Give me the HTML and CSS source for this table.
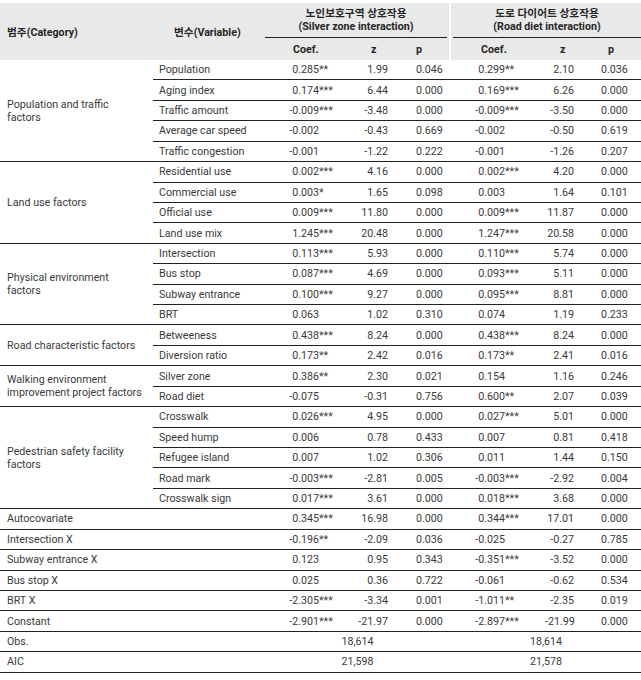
FILE: index.html
```html
<!DOCTYPE html>
<html lang="ko">
<head>
<meta charset="utf-8">
<link rel="stylesheet" href="styles.css">
</head>
<body>
<table class="tbl">
  <colgroup>
    <col class="w-cat"><col class="w-var"><col class="w-c1"><col class="w-z1"><col class="w-p1"><col class="w-c2"><col class="w-z2"><col class="w-p2">
  </colgroup>
  <thead>
    <tr class="h1">
      <th rowspan="2" class="hcat">범주(Category)</th>
      <th rowspan="2" class="hvar">변수(Variable)</th>
      <th colspan="3" class="grp g1"><div class="gt">노인보호구역 상호작용<br>(Silver zone interaction)</div></th>
      <th colspan="3" class="grp g2"><div class="gt">도로 다이어트 상호작용<br>(Road diet interaction)</div></th>
    </tr>
    <tr class="h2">
      <th class="hc1">Coef.</th><th class="hz1">z</th><th class="hp1">p</th>
      <th class="hc2">Coef.</th><th class="hz2">z</th><th class="hp2">p</th>
    </tr>
  </thead>
  <tbody>
    <tr><td rowspan="5" class="cat">Population and traffic<br>factors</td><td class="var">Population</td><td class="c1"><span class="n">0.285</span>**</td><td class="z1">1.99</td><td class="p1">0.046</td><td class="c2"><span class="n">0.299</span>**</td><td class="z2">2.10</td><td class="p2">0.036</td></tr>
    <tr><td class="var">Aging index</td><td class="c1"><span class="n">0.174</span>***</td><td class="z1">6.44</td><td class="p1">0.000</td><td class="c2"><span class="n">0.169</span>***</td><td class="z2">6.26</td><td class="p2">0.000</td></tr>
    <tr><td class="var">Traffic amount</td><td class="c1"><span class="n">-0.009</span>***</td><td class="z1">-3.48</td><td class="p1">0.000</td><td class="c2"><span class="n">-0.009</span>***</td><td class="z2">-3.50</td><td class="p2">0.000</td></tr>
    <tr><td class="var">Average car speed</td><td class="c1"><span class="n">-0.002</span></td><td class="z1">-0.43</td><td class="p1">0.669</td><td class="c2"><span class="n">-0.002</span></td><td class="z2">-0.50</td><td class="p2">0.619</td></tr>
    <tr><td class="var">Traffic congestion</td><td class="c1"><span class="n">-0.001</span></td><td class="z1">-1.22</td><td class="p1">0.222</td><td class="c2"><span class="n">-0.001</span></td><td class="z2">-1.26</td><td class="p2">0.207</td></tr>

    <tr><td rowspan="4" class="cat">Land use factors</td><td class="var">Residential use</td><td class="c1"><span class="n">0.002</span>***</td><td class="z1">4.16</td><td class="p1">0.000</td><td class="c2"><span class="n">0.002</span>***</td><td class="z2">4.20</td><td class="p2">0.000</td></tr>
    <tr><td class="var">Commercial use</td><td class="c1"><span class="n">0.003</span>*</td><td class="z1">1.65</td><td class="p1">0.098</td><td class="c2"><span class="n">0.003</span></td><td class="z2">1.64</td><td class="p2">0.101</td></tr>
    <tr><td class="var">Official use</td><td class="c1"><span class="n">0.009</span>***</td><td class="z1">11.80</td><td class="p1">0.000</td><td class="c2"><span class="n">0.009</span>***</td><td class="z2">11.87</td><td class="p2">0.000</td></tr>
    <tr><td class="var">Land use mix</td><td class="c1"><span class="n">1.245</span>***</td><td class="z1">20.48</td><td class="p1">0.000</td><td class="c2"><span class="n">1.247</span>***</td><td class="z2">20.58</td><td class="p2">0.000</td></tr>

    <tr><td rowspan="4" class="cat">Physical environment<br>factors</td><td class="var">Intersection</td><td class="c1"><span class="n">0.113</span>***</td><td class="z1">5.93</td><td class="p1">0.000</td><td class="c2"><span class="n">0.110</span>***</td><td class="z2">5.74</td><td class="p2">0.000</td></tr>
    <tr><td class="var">Bus stop</td><td class="c1"><span class="n">0.087</span>***</td><td class="z1">4.69</td><td class="p1">0.000</td><td class="c2"><span class="n">0.093</span>***</td><td class="z2">5.11</td><td class="p2">0.000</td></tr>
    <tr><td class="var">Subway entrance</td><td class="c1"><span class="n">0.100</span>***</td><td class="z1">9.27</td><td class="p1">0.000</td><td class="c2"><span class="n">0.095</span>***</td><td class="z2">8.81</td><td class="p2">0.000</td></tr>
    <tr><td class="var">BRT</td><td class="c1"><span class="n">0.063</span></td><td class="z1">1.02</td><td class="p1">0.310</td><td class="c2"><span class="n">0.074</span></td><td class="z2">1.19</td><td class="p2">0.233</td></tr>

    <tr><td rowspan="2" class="cat">Road characteristic factors</td><td class="var">Betweeness</td><td class="c1"><span class="n">0.438</span>***</td><td class="z1">8.24</td><td class="p1">0.000</td><td class="c2"><span class="n">0.438</span>***</td><td class="z2">8.24</td><td class="p2">0.000</td></tr>
    <tr><td class="var">Diversion ratio</td><td class="c1"><span class="n">0.173</span>**</td><td class="z1">2.42</td><td class="p1">0.016</td><td class="c2"><span class="n">0.173</span>**</td><td class="z2">2.41</td><td class="p2">0.016</td></tr>

    <tr><td rowspan="2" class="cat">Walking environment<br>improvement project factors</td><td class="var">Silver zone</td><td class="c1"><span class="n">0.386</span>**</td><td class="z1">2.30</td><td class="p1">0.021</td><td class="c2"><span class="n">0.154</span></td><td class="z2">1.16</td><td class="p2">0.246</td></tr>
    <tr><td class="var">Road diet</td><td class="c1"><span class="n">-0.075</span></td><td class="z1">-0.31</td><td class="p1">0.756</td><td class="c2"><span class="n">0.600</span>**</td><td class="z2">2.07</td><td class="p2">0.039</td></tr>

    <tr><td rowspan="5" class="cat">Pedestrian safety facility<br>factors</td><td class="var">Crosswalk</td><td class="c1"><span class="n">0.026</span>***</td><td class="z1">4.95</td><td class="p1">0.000</td><td class="c2"><span class="n">0.027</span>***</td><td class="z2">5.01</td><td class="p2">0.000</td></tr>
    <tr><td class="var">Speed hump</td><td class="c1"><span class="n">0.006</span></td><td class="z1">0.78</td><td class="p1">0.433</td><td class="c2"><span class="n">0.007</span></td><td class="z2">0.81</td><td class="p2">0.418</td></tr>
    <tr><td class="var">Refugee island</td><td class="c1"><span class="n">0.007</span></td><td class="z1">1.02</td><td class="p1">0.306</td><td class="c2"><span class="n">0.011</span></td><td class="z2">1.44</td><td class="p2">0.150</td></tr>
    <tr><td class="var">Road mark</td><td class="c1"><span class="n">-0.003</span>***</td><td class="z1">-2.81</td><td class="p1">0.005</td><td class="c2"><span class="n">-0.003</span>***</td><td class="z2">-2.92</td><td class="p2">0.004</td></tr>
    <tr><td class="var">Crosswalk sign</td><td class="c1"><span class="n">0.017</span>***</td><td class="z1">3.61</td><td class="p1">0.000</td><td class="c2"><span class="n">0.018</span>***</td><td class="z2">3.68</td><td class="p2">0.000</td></tr>

    <tr><td colspan="2" class="cat">Autocovariate</td><td class="c1"><span class="n">0.345</span>***</td><td class="z1">16.98</td><td class="p1">0.000</td><td class="c2"><span class="n">0.344</span>***</td><td class="z2">17.01</td><td class="p2">0.000</td></tr>
    <tr><td colspan="2" class="cat">Intersection X</td><td class="c1"><span class="n">-0.196</span>**</td><td class="z1">-2.09</td><td class="p1">0.036</td><td class="c2"><span class="n">-0.025</span></td><td class="z2">-0.27</td><td class="p2">0.785</td></tr>
    <tr><td colspan="2" class="cat">Subway entrance X</td><td class="c1"><span class="n">0.123</span></td><td class="z1">0.95</td><td class="p1">0.343</td><td class="c2"><span class="n">-0.351</span>***</td><td class="z2">-3.52</td><td class="p2">0.000</td></tr>
    <tr><td colspan="2" class="cat">Bus stop X</td><td class="c1"><span class="n">0.025</span></td><td class="z1">0.36</td><td class="p1">0.722</td><td class="c2"><span class="n">-0.061</span></td><td class="z2">-0.62</td><td class="p2">0.534</td></tr>
    <tr><td colspan="2" class="cat">BRT X</td><td class="c1"><span class="n">-2.305</span>***</td><td class="z1">-3.34</td><td class="p1">0.001</td><td class="c2"><span class="n">-1.011</span>**</td><td class="z2">-2.35</td><td class="p2">0.019</td></tr>
    <tr><td colspan="2" class="cat">Constant</td><td class="c1"><span class="n">-2.901</span>***</td><td class="z1">-21.97</td><td class="p1">0.000</td><td class="c2"><span class="n">-2.897</span>***</td><td class="z2">-21.99</td><td class="p2">0.000</td></tr>
    <tr><td colspan="2" class="cat">Obs.</td><td colspan="3" class="mid">18,614</td><td colspan="3" class="mid">18,614</td></tr>
    <tr><td colspan="2" class="cat">AIC</td><td colspan="3" class="mid">21,598</td><td colspan="3" class="mid">21,578</td></tr>
  </tbody>
</table>
</body>
</html>
```
FILE: styles.css
```css
html, body {
  margin: 0;
  padding: 0;
  background: #fff;
}

body {
  font-family: Roboto, "Noto Sans CJK KR", sans-serif;
  font-size: 10.7px;
  color: #3a3a3a;
}

.tbl {
  margin-top: 3px;
  width: 641px;
  table-layout: fixed;
  border-collapse: separate;
  border-spacing: 0;
}

.w-cat { width: 153px; }
.w-var { width: 111px; }
.w-c1 { width: 94px; }
.w-z1 { width: 40px; }
.w-p1 { width: 53px; }
.w-c2 { width: 94px; }
.w-z2 { width: 40px; }
.w-p2 { width: 56px; }

th {
  background: #e9e9e9;
  font-weight: 700;
  color: #262626;
  padding: 0;
  white-space: nowrap;
}

.h1 { height: 36px; }
.h2 { height: 21px; }

.hcat { text-align: left; padding-left: 7px; }
.hvar { text-align: left; padding-left: 21px; }

.grp { vertical-align: top; padding-top: 4px; line-height: 13px; text-align: center; }
.g1 { border-right: 2px solid #fff; }
.g1 .gt { margin-left: 1px; margin-right: 2px; border-bottom: 1px solid #222; padding-bottom: 4px; }
.g2 .gt { margin-left: 2px; border-bottom: 1px solid #222; padding-bottom: 4px; }

.hc1, .hc2 { text-align: left; padding-left: 29px; }
.hc2 { padding-left: 30px; }
.hz1, .hz2 { text-align: left; padding-left: 13px; }
.hz2 { padding-left: 15px; }
.hp1 { text-align: left; padding-left: 18px; border-right: 2px solid #fff; }
.hp2 { text-align: left; padding-left: 23px; }

tbody tr { height: 20.43px; }

td {
  padding: 0;
  border-bottom: 1px solid #222;
  white-space: nowrap;
  vertical-align: middle;
}

.cat { padding-left: 7px; line-height: 13px; }
.var { padding-left: 6px; }

.c1, .c2 { text-align: left; }
.n { display: inline-block; text-align: right; }
.c1 .n { width: 55px; }
.c2 .n { width: 54px; }

.z1, .z2 { text-align: right; padding-right: 10px; }
.z2 { padding-right: 11px; }

.p1 { padding-left: 18px; }
.p2 { padding-left: 16px; }

.mid { text-align: center; }
```
